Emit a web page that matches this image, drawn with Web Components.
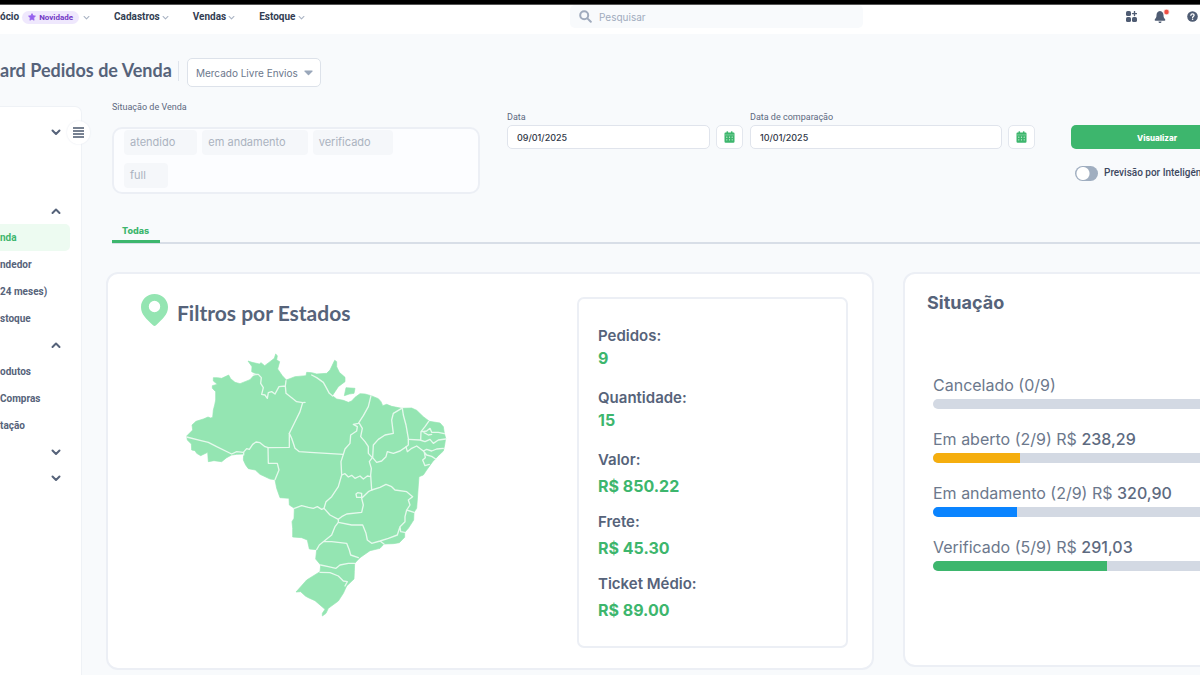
<!DOCTYPE html>
<html lang="pt-BR">
<head>
<meta charset="utf-8">
<meta name="viewport" content="width=device-width, initial-scale=1">
<title>Dashboard Pedidos de Venda</title>
<style>
  html { background: #f8fafc; }
  body {
    margin: 0;
    overflow-x: hidden;
    font-family: Inter, "Liberation Sans", sans-serif;
    color: #56637a;
    --slate: #56637a;
    --muted: #a0abbd;
    --line: #eceff5;
    --green: #3db66d;
    --mint: #94e5b2;
  }
</style>
</head>
<body>
<dash-page>
  <dash-header slot="header">
    <nav-entry badge="Novidade">ócio</nav-entry>
    <nav-entry>Cadastros</nav-entry>
    <nav-entry>Vendas</nav-entry>
    <nav-entry>Estoque</nav-entry>
  </dash-header>
  <dash-title slot="title">ard Pedidos de Venda</dash-title>
  <side-menu slot="side"></side-menu>
  <filter-bar></filter-bar>
  <tab-bar>Todas</tab-bar>
  <card-row>
    <states-card>
      <stat-item label="Pedidos:" compact>9</stat-item>
      <stat-item label="Quantidade:" compact>15</stat-item>
      <stat-item label="Valor:">R$ 850.22</stat-item>
      <stat-item label="Frete:">R$ 45.30</stat-item>
      <stat-item label="Ticket Médio:">R$ 89.00</stat-item>
    </states-card>
    <status-card>
      <status-bar label="Cancelado (0/9)" percent="0"></status-bar>
      <status-bar label="Em aberto (2/9) R$" amount="238,29" percent="28" color="#f5ae0e"></status-bar>
      <status-bar label="Em andamento (2/9) R$" amount="320,90" percent="27" color="#0a84ff"></status-bar>
      <status-bar label="Verificado (5/9) R$" amount="291,03" percent="56" color="#3db66d"></status-bar>
    </status-card>
  </card-row>
</dash-page>

<script>
const define = (name, render) => {
  customElements.define(name, class extends HTMLElement {
    constructor() {
      super();
      this.attachShadow({ mode: 'open' });
    }
    connectedCallback() {
      const t = document.createElement('template');
      t.innerHTML = '<style>*{box-sizing:border-box}:host{display:block;box-sizing:border-box}</style>' + render(this);
      this.shadowRoot.replaceChildren(t.content.cloneNode(true));
    }
  });
};

const chevron = (dir, w = 9, sw = 2) =>
  `<svg width="${w}" height="${w}" viewBox="0 0 10 10" fill="none" stroke="currentColor" stroke-width="${sw}" stroke-linecap="round" stroke-linejoin="round" aria-hidden="true"><path d="${dir === 'up' ? 'M1.5 7 5 3.5 8.5 7' : 'M1.5 3.5 5 7 8.5 3.5'}"/></svg>`;

define('dash-page', () => `
  <style>
    :host { min-height: 100vh; overflow: hidden; display: flex; flex-direction: column; }
    .strip { height: 4px; background: #000; border-bottom: 1px solid #555; box-sizing: content-box; }
    .body { flex: 1; display: grid; grid-template-columns: 82px minmax(0, 1fr); width: calc(100% + 73px); }
    main { padding: 0 0 6px 24px; }
  </style>
  <div class="strip"></div>
  <slot name="header"></slot>
  <slot name="title"></slot>
  <div class="body"><slot name="side"></slot><main><slot></slot></main></div>`);

define('dash-header', () => `
  <style>
    :host { background: #fff; }
    header { display: grid; grid-template-columns: 570fr 293fr 337fr; height: 29px; }
    nav { display: flex; gap: 24px; height: 24px; align-items: center; }
    .search { display: flex; align-items: center; gap: 7px; height: 23px; padding-left: 9px; background: #f8fafc; border-radius: 5px; color: var(--muted); }
    input { flex: 1; min-width: 0; border: 0; padding: 0; outline: 0; background: none; font: 10px/14px Inter, sans-serif; color: var(--slate); }
    input::placeholder { color: var(--muted); opacity: 1; }
    .tools { display: flex; justify-content: flex-end; align-items: center; height: 22px; gap: 17px; padding-right: 2px; }
    button { display: flex; border: 0; padding: 0; background: none; color: #4f5c73; }
  </style>
  <header>
    <nav aria-label="Principal"><slot></slot></nav>
    <label class="search">
      <svg width="13" height="13" viewBox="0 0 13 13" fill="none" stroke="currentColor" stroke-width="2" stroke-linecap="round" aria-hidden="true"><circle cx="5.2" cy="5.2" r="4"/><path d="m8.4 8.4 3.4 3.4"/></svg>
      <input type="search" placeholder="Pesquisar" aria-label="Pesquisar">
    </label>
    <div class="tools">
      <button aria-label="Aplicativos"><svg width="11" height="11" viewBox="0 0 11 11" fill="currentColor"><rect width="5" height="5" rx="1.6"/><rect y="6" width="5" height="5" rx="1.6"/><rect x="6" y="6" width="5" height="5" rx="1.6"/><path d="M8.500.6v4M6.500 2.600h4" stroke="currentColor" stroke-width="1.400" stroke-linecap="round"/></svg></button>
      <button aria-label="Notificações"><svg width="16" height="15" viewBox="0 0 16 15" fill="currentColor"><path d="M6 2C3.500 2.300 2.500 4.200 2.500 6.300 2.500 8.500 1.700 9.300.8 10.500c-.4.6 0 1.200.6 1.200h9.200c.6 0 1-.6.6-1.200C10.300 9.300 9.500 8.500 9.500 6.300 9.500 4.200 8.500 2.300 6 2z"/><path d="M4.500 12.400h3c0 2-3 2-3 0z"/><circle cx="12.500" cy="3" r="3" fill="#fbd0cc"/><circle cx="12.500" cy="3" r="2.200" fill="#ee4d43"/></svg></button>
      <button aria-label="Ajuda"><svg width="11" height="11" viewBox="0 0 11 11"><circle cx="5.500" cy="5.500" r="5.300" fill="currentColor"/><path d="M3.900 4.300c.1-2 3.200-1.900 3.200 0 0 1.100-1.500 1.100-1.500 2.200" fill="none" stroke="#fff" stroke-width="1.300" stroke-linecap="round"/><circle cx="5.600" cy="8.300" r=".8" fill="#fff"/></svg></button>
    </div>
  </header>`);

define('nav-entry', el => `
  <style>
    a { display: flex; align-items: center; color: #323d52; text-decoration: none; font: 700 10px/16px Roboto, sans-serif; white-space: nowrap; gap: 2px; }
    .badge { display: flex; align-items: center; gap: 3px; height: 13px; padding: 0 6px; margin: 0 2px 0 1px; border-radius: 7px; background: #efe8fd; color: #7339c6; font-size: 8px; line-height: 13px; }
    .chev { display: flex; color: #a9b3c3; }
  </style>
  <a href="#"><slot></slot>${el.hasAttribute('badge') ? `<span class="badge"><svg width="8" height="8" viewBox="0 0 10 10" fill="#9560ee" stroke="#9560ee" stroke-linejoin="round" aria-hidden="true"><path d="m5 .8 1.300 2.700 3 .4-2.200 2.100.5 3L5 7.600 2.400 9l.5-3L.7 3.900l3-.4z"/></svg>${el.getAttribute('badge')}</span>` : ''}<span class="chev">${chevron('down', 7, 1.5)}</span></a>`);

define('dash-title', () => `
  <style>
    :host { display: flex; align-items: flex-start; height: 67px; padding-top: 24px; }
    h1 { margin: 0; font: 700 18px/24px Lato, sans-serif; color: var(--slate); white-space: nowrap; }
    .rule { width: 1px; height: 20px; margin: 3px 8px 0 6px; background: #dfe4ec; }
    .box { position: relative; display: block; color: #9aa7ba; }
    select { appearance: none; width: 134px; height: 29px; padding: 0 16px 0 8px; border: 1px solid #dde2ea; border-radius: 5px; background: #fff; color: #6c788c; font: 10px/14px Inter, sans-serif; }
    svg { position: absolute; right: 8px; top: 12px; }
  </style>
  <h1><slot></slot></h1><span class="rule"></span>
  <span class="box"><select aria-label="Canal de venda"><option>Mercado Livre Envios</option></select>
  <svg width="9" height="6" viewBox="0 0 9 6" fill="currentColor" aria-hidden="true"><path d="M1 .5h7q1 .2.400 1L5 5q-.5.500-1 0L.6 1.500Q0 .7 1 .5z"/></svg></span>`);

define('side-menu', () => {
  const link = (t, on) => `<a href="#"${on ? ' class="on" aria-current="page"' : ''}>${t}</a>`;
  const fold = (d, n) => `<button class="fold" aria-label="${n}">${chevron(d, 10)}</button>`;
  return `
  <style>
    :host { position: relative; margin-top: 5px; padding-top: 12px; background: #fff; border: 1px solid #eff2f6; border-left: 0; border-radius: 0 7px 0 0; }
    .fold { display: flex; justify-content: flex-end; align-items: center; width: 100%; height: 26px; padding: 0 20px 0 0; border: 0; background: none; color: #56637a; }
    nav { display: flex; flex-direction: column; margin-top: 53px; }
    a { display: block; width: 70px; height: 27px; color: #56637a; font: 700 10px/27px Roboto, sans-serif; text-decoration: none; white-space: nowrap; }
    .on { background: #edfbf1; color: var(--green); border-radius: 0 5px 5px 0; }
    .toggle { position: absolute; right: -9px; top: 14px; width: 23px; height: 23px; display: grid; place-items: center; padding: 0; border: 0; border-radius: 50%; background: #fff; box-shadow: 0 0 2px #e2e6ee; color: #4b586e; }
  </style>
  ${fold('down', 'Expandir')}
  <button class="toggle" aria-label="Menu"><svg width="11" height="11" viewBox="0 0 11 11" stroke="currentColor" stroke-width="1.4" aria-hidden="true"><path d="M0 1h11M0 4h11M0 7h11M0 10h11"/></svg></button>
  <nav aria-label="Relatórios">
    ${fold('up', 'Recolher vendas')}
    ${link('nda', true)}${link('ndedor')}${link('24 meses)')}${link('stoque')}
    ${fold('up', 'Recolher estoque')}
    ${link('odutos')}${link('Compras')}${link('tação')}
    ${fold('down', 'Expandir')}${fold('down', 'Expandir')}
  </nav>`;
});

define('date-field', el => `
  <style>
    :host { padding-top: 10px; }
    label { display: block; font: 9px/12px Roboto, sans-serif; margin-bottom: 2px; color: #5d6980; }
    .row { display: flex; gap: 6px; }
    input { flex: 1; min-width: 0; height: 24px; padding: 0 9px; border: 1px solid #e0e4ec; border-radius: 5px; background: #fff; color: #2f3746; font: 500 9px/14px Inter, sans-serif; outline: 0; }
    button { width: 27px; height: 24px; display: grid; place-items: center; padding: 0; border: 1px solid #e3e7ee; border-radius: 5px; background: #fff; color: var(--green); }
  </style>
  <label for="d">${el.getAttribute('label')}</label>
  <div class="row"><input id="d" type="text" value="${el.getAttribute('value')}">
  <button aria-label="Abrir calendário"><svg width="11" height="12" viewBox="0 0 11 12" fill="currentColor" aria-hidden="true"><path d="M1.500 1.500h1V.6q.9-.9 1.600 0v.9h2.800V.6q.8-.9 1.600 0v.9h1q1 0 1 1v8q0 1.200-1.100 1.200H1.600Q.5 11.700.5 10.500v-8q0-1 1-1z"/><path d="M.5 3.900h10" stroke="#9fdcb6" stroke-width=".6"/><g fill="#d9f4e2"><circle cx="2.800" cy="6.200" r=".6"/><circle cx="5.500" cy="6.200" r=".6"/><circle cx="8.200" cy="6.200" r=".6"/><circle cx="2.800" cy="8.800" r=".6"/><circle cx="5.500" cy="8.800" r=".6"/><circle cx="8.200" cy="8.800" r=".6"/></g></svg></button></div>`);

define('filter-bar', () => `
  <style>
    .filters { display: grid; grid-template-columns: 388fr 236fr 285fr 201fr; gap: 7px; padding: 0 30px 0 6px; align-items: start; }
    .situation { padding-right: 20px; }
    .cap { font: 9px/12px Roboto, sans-serif; margin-bottom: 14px; color: #5d6980; }
    ul { display: flex; flex-wrap: wrap; gap: 7px 5px; margin: 0; min-height: 67px; padding: 1px 60px 4px 10px; list-style: none; border: 2px solid #eceff5; border-radius: 10px; background: #fcfdff; }
    li { height: 25px; padding: 0 22px 0 6px; border-radius: 4px; background: #f5f7fa; color: #abb3c0; font-size: 11px; line-height: 25px; }
    .actions { padding: 24px 0 0 29px; }
    .go { display: block; width: 100%; height: 24px; border: 0; border-radius: 5px; background: var(--green); color: #fff; font: 800 8px/24px Inter, sans-serif; }
    .ai { display: flex; align-items: center; gap: 6px; margin: 16px 0 0 4px; font: 500 10px/16px Roboto, sans-serif; color: #3d4860; white-space: nowrap; }
    .ai input { appearance: none; flex: none; width: 23px; height: 15px; margin: 0; border-radius: 8px; background: radial-gradient(circle at 8px 50%, #fff 6px, transparent 7px) #a0aec0; }
  </style>
  <div class="filters">
    <section class="situation"><div class="cap">Situação de Venda</div>
      <ul><li>atendido</li><li>em andamento</li><li>verificado</li><li>full</li></ul></section>
    <date-field label="Data" value="09/01/2025"></date-field>
    <date-field label="Data de comparação" value="10/01/2025"></date-field>
    <div class="actions"><button class="go">Visualizar</button>
      <label class="ai"><input type="checkbox" role="switch">Previsão por Inteligên</label></div>
  </div>`);

define('tab-bar', () => `
  <style>
    :host { margin: 29px 0 0 6px; }
    div { display: flex; height: 21px; border-bottom: 2px solid #d8dee7; }
    button { height: 20px; padding: 0 11px 3px 10px; border: 0; border-bottom: 3px solid var(--green); background: none; color: var(--green); font: 800 9px/16px Inter, sans-serif; }
  </style>
  <div role="tablist"><button role="tab" aria-selected="true"><slot></slot></button></div>`);

define('card-row', () => `
  <style>:host { display: grid; grid-template-columns: 768fr 370fr; gap: 29px; margin-top: 28px; align-items: start; }</style><slot></slot>`);

define('states-card', () => `
  <style>
    :host { display: flex; align-items: flex-start; padding: 20px 24px 20px 33px; border: 2px solid var(--line); border-radius: 12px; background: #fff; }
    .left { flex: 1; min-width: 0; }
    h2 { display: flex; align-items: flex-start; gap: 9px; margin: 0 0 19px; height: 32px; font: 700 21px/38px Lato, sans-serif; color: var(--slate); white-space: nowrap; }
    .map { display: block; width: 275px; max-width: 100%; margin-left: 39px; }
    dl { width: 271px; margin: 3px 0 0; display: grid; grid-auto-rows: 62px; padding: 27px 19px 10px; border: 2px solid var(--line); border-radius: 7px; }
  </style>
  <div class="left">
    <h2><svg width="27" height="32" viewBox="0 0 27 32" aria-hidden="true"><path fill="#94e5b2" fill-rule="evenodd" d="M13.500 0C6 0 0 5.800 0 13c0 7.500 5.500 12 12 18.300q1.500 1.400 3 0C21.500 25 27 20.500 27 13 27 5.800 21 0 13.500 0zm0 6.800a5.700 5.700 0 1 1 0 11.400 5.700 5.700 0 0 1 0-11.400z"/></svg>Filtros por Estados</h2>
    <svg class="map" viewBox="0 0 825 840" role="img" aria-label="Mapa do Brasil">
      <g fill="#94e5b2" stroke="#94e5b2" stroke-width="2" stroke-linejoin="round">
        <path d="M20 273 38 255 36 240 48 229 70 222 84 216 92 219 98 217 100 195 104 180 107 165 107 140 97 130 97 122 112 118 100 108 100 98 112 98 125 100 146 90 152 101 165 112 180 116 195 110 210 104 220 93 235 90 215 80 216 65 204 48 216 52 238 57 243 53 254 62 270 50 283 40 287 27 292 32 290 45 299 50 293 72 307 92 319 105 345 95 378 92 380 82 395 83 410 87 440 85 450 75 464 46 470 50 470 65 478 82 495 97 495 110 475 125 465 140 457 152 470 162 490 166 505 172 515 168 525 157 540 146 555 147 573 152 595 161 603 170 608 182 620 178 635 184 665 190 695 189 710 196 730 215 748 229 780 234 790 245 793 265 797 280 794 300 790 318 775 332 758 350 740 375 730 390 717 395 715 420 713 450 710 490 702 502 701 525 685 550 674 562 674 577 658 593 640 596 612 597 600 610 570 617 540 638 524 655 523 680 522 702 500 723 490 745 475 768 445 790 438 805 427 813 427 805 435 793 405 767 385 758 376 753 362 740 348 741 380 705 420 680 422 660 407 642 410 614 388 612 382 585 365 578 338 576 338 550 336 530 342 520 343 490 328 480 327 460 300 458 290 430 285 404 270 402 240 388 226 375 205 371 197 360 190 345 191 327 170 328 155 330 140 338 125 350 102 347 85 350 83 322 62 332 50 325 45 317 35 315 34 297 22 285z"/>
        <path d="M498 128 525 130 522 145 508 147 493 152z"/>
      </g>
      <g fill="none" stroke="#e6f9ed" stroke-width="4" stroke-linejoin="round" stroke-linecap="round">
        <path d="M20 276 60 286 85 292 110 305 155 327 170 320 190 322 200 311 208 313 218 298 228 291 240 293 255 305 265 308 328 307 328 265 345 230 360 200 368 173"/>
        <path d="M264 308 265 355 292 355 297 375 285 404M191 322V330"/>
        <path d="M220 88 235 88 244 98 242 115 250 128 245 148 255 150 262 160 265 143 275 140 285 147 297 125 316 123 318 107M316 123 318 145 335 158 350 170 368 173 375 172"/>
        <path d="M328 265 335 280 345 310 358 320 390 322 490 328M395 90 410 98 430 112 440 130 448 145 458 153"/>
        <path d="M573 152 565 185 550 212 535 235 520 238 532 245 530 258 512 270 510 295 495 312 490 328 483 350 485 390 475 425 455 455 438 470 432 490"/>
        <path d="M538 235 547 250 542 275 555 290 565 305 565 325 577 338 568 350 574 370 572 390 575 435M485 390 495 386 505 396 515 391 525 400 540 393 550 402 562 393 572 395"/>
        <path d="M665 190 640 205 635 225 640 265 615 270 595 283 580 300 578 338 590 352 605 348 618 335 622 320 640 325 660 318 675 308 685 300 685 280 678 240 670 210 667 190"/>
        <path d="M678 305 682 320 695 310 710 303 730 318 740 313 755 318 770 312 790 310M730 318 740 330 755 334 767 342M733 322 736 338 728 345 735 362 748 358"/>
        <path d="M685 283 720 285 735 290 750 283 760 295 775 285 797 282M746 229 735 245 723 260 722 285M727 260 740 258 750 250 755 262 775 262 793 266M732 263 745 270 755 268"/>
        <path d="M343 490 365 482 385 487 400 490 412 485 425 493 432 490 450 510 475 523 485 515 500 507 545 502 550 480 545 460 555 450 565 440 575 435M528 447 533 443 545 445 545 457 530 457z"/>
        <path d="M575 435 600 427 618 418 635 425 645 435 680 440 698 455 685 465 690 480 680 495 702 502M680 495 675 515 675 530 660 545 652 570 625 580 600 588 575 595 562 585 558 565 548 540 515 540 475 532 475 523M660 545 662 560 674 562M600 588 612 597"/>
        <path d="M475 532 465 545 455 570 430 590 418 600 410 614M430 590 455 590 500 595 508 615 512 630 535 638M422 660 445 665 468 670 480 660 505 655 524 655M420 682 450 683 475 693 490 708 502 710 495 723"/>
      </g>
    </svg>
  </div>
  <dl><slot></slot></dl>`);

define('stat-item', el => `
  <style>
    dt { font-size: 15px; line-height: 20px; font-weight: 600; color: var(--slate); }
    dd { margin: 0; font-size: 16px; line-height: 32px; font-weight: 700; color: var(--green); }
    :host([compact]) dd { line-height: 24px; }
  </style>
  <dt>${el.getAttribute('label')}</dt><dd><slot></slot></dd>`);

define('status-card', () => `
  <style>
    :host { min-height: 395px; padding: 17px 28px 20px 22px; border: 2px solid var(--line); border-radius: 12px; background: #fff; }
    h2 { margin: 0 0 58px; font-size: 18px; line-height: 24px; font-weight: 700; color: var(--slate); }
    div { display: grid; gap: 18px; padding-left: 6px; }
  </style>
  <h2>Situação</h2><div><slot></slot></div>`);

define('status-bar', el => `
  <style>
    p { margin: 0 0 2px; font-size: 16px; line-height: 24px; color: #6c788c; white-space: nowrap; }
    b { font-weight: 500; color: #5d6a80; }
    .track { height: 10px; border-radius: 5px; overflow: hidden; background: #d3d9e3; }
    .fill { height: 100%; width: ${el.getAttribute('percent')}%; background: ${el.getAttribute('color') || 'none'}; }
  </style>
  <p>${el.getAttribute('label')} <b>${el.getAttribute('amount') || ''}</b></p>
  <div class="track" role="progressbar" aria-label="${el.getAttribute('label')}" aria-valuenow="${el.getAttribute('percent')}"><div class="fill"></div></div>`);
</script>
</body>
</html>
